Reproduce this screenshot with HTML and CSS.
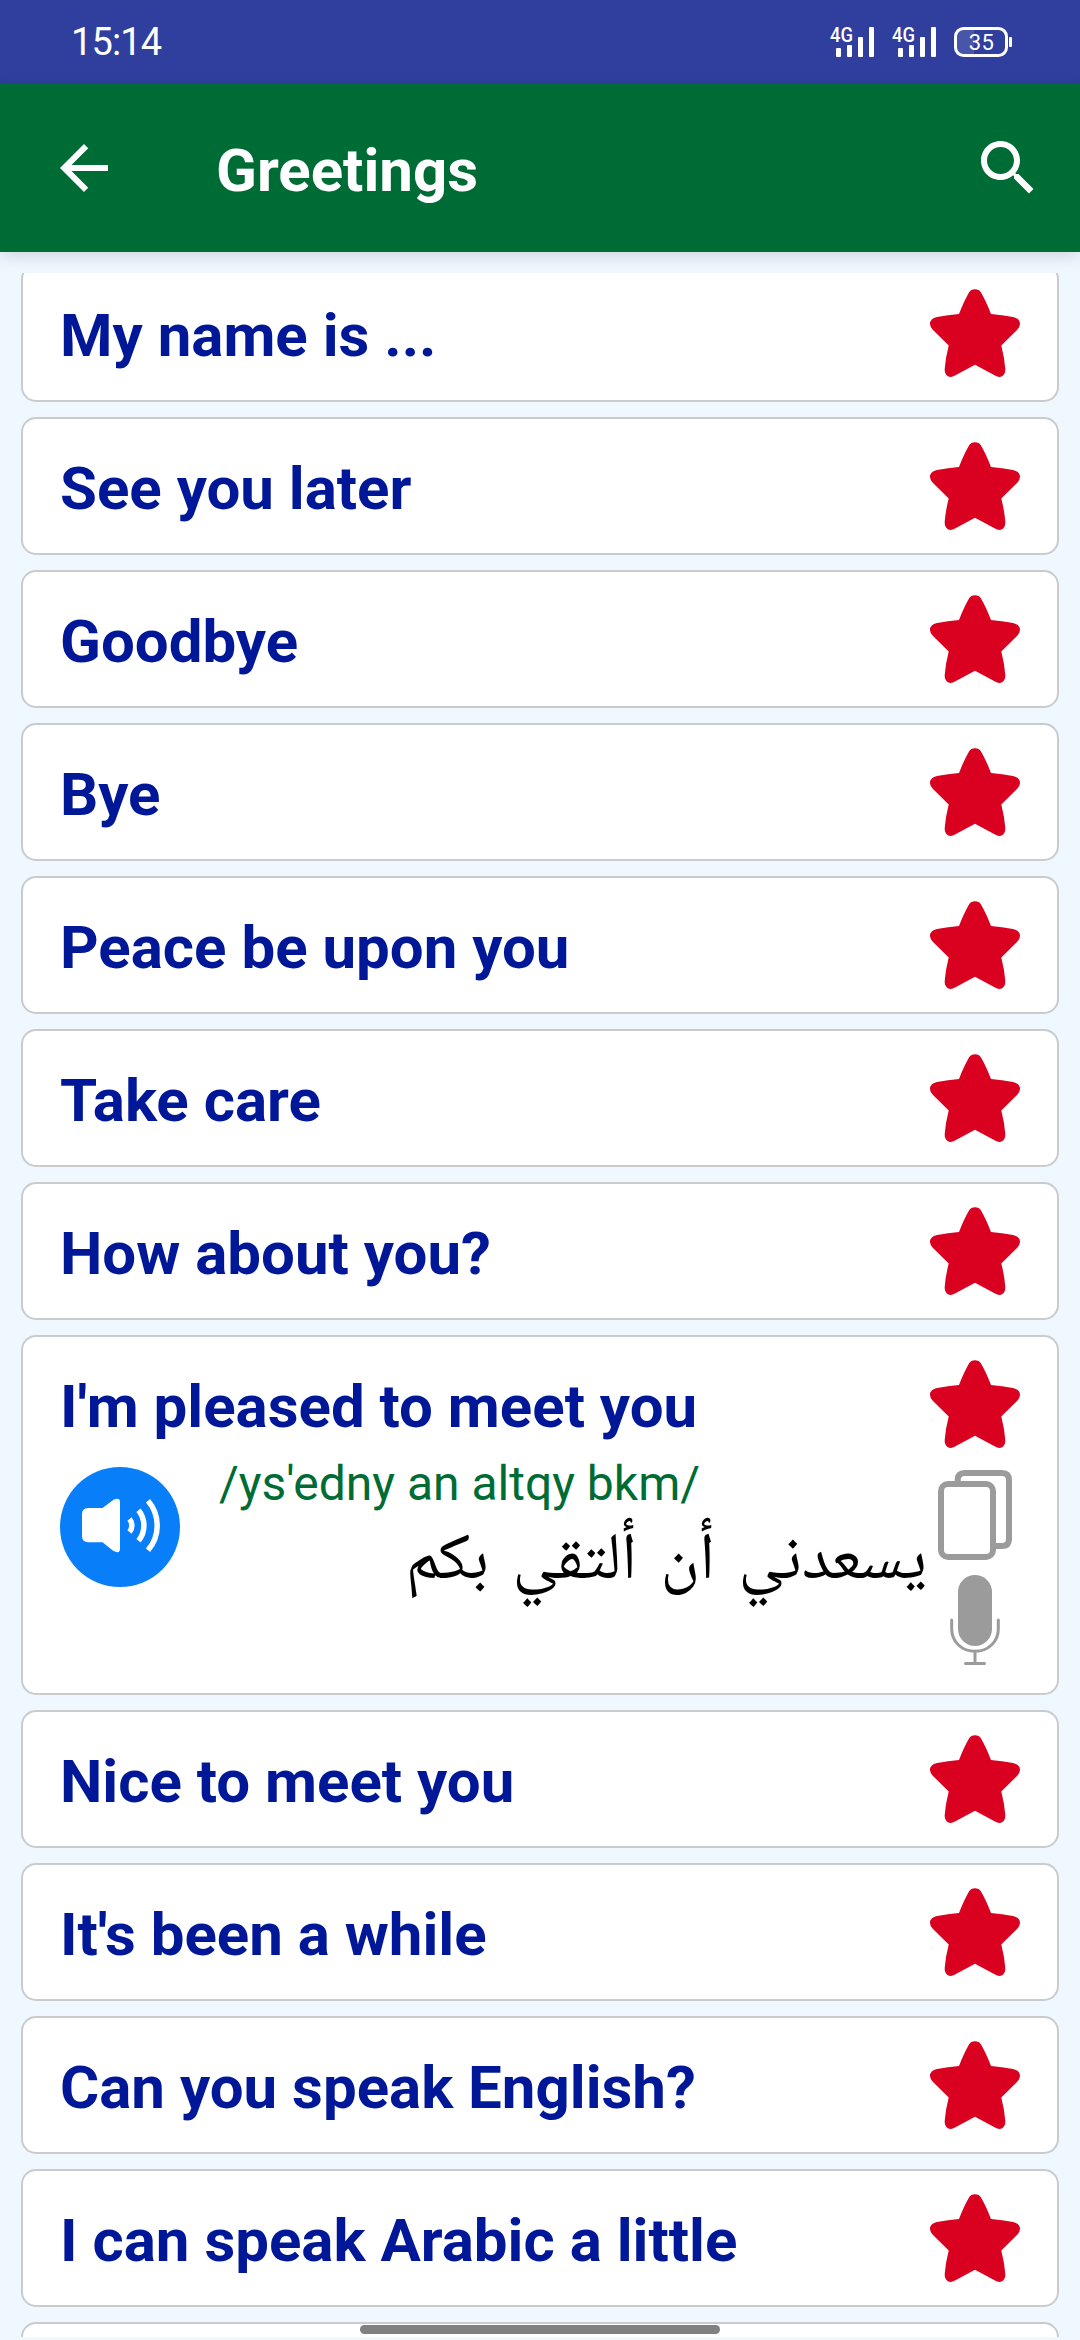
FILE: index.html
```
<!DOCTYPE html>
<html lang="en">

<head>
  <meta charset="utf-8">
  <title>Greetings</title>
  <link rel="stylesheet" href="styles.css">
</head>

<body>
  <svg class="sprite" width="0" height="0">
    <symbol id="star" viewBox="0 0 90 90">
      <path d="M39 4.5Q41 1.3 45 1.3T51 4.5Q56 13 61 26Q72 26.800 83 29Q90 30.500 90 36Q90 39 87 42L71.300 57.500Q74.500 70 75.300 81Q75.500 86 72.500 88Q69 90 65 87.500L45 76.700L25 87.500Q21 90 17.500 88Q14.500 86 14.700 81Q15.500 70 18.700 57.500L3 42Q0 39 0 36Q0 30.500 7 29Q18 26.800 29 26Q34 13 39 4.500Z" fill="#d90020"/>
    </symbol>
    <symbol id="bars" viewBox="0 0 46 30">
      <rect x="6" y="21" width="5" height="9" rx="1"/>
      <rect x="17" y="18" width="5" height="12" rx="1"/>
      <rect x="28" y="10" width="5" height="20" rx="1"/>
      <rect x="39" y="0" width="5" height="30" rx="1"/>
    </symbol>
  </svg>

  <div class="status-bar">
    <span class="clock">15:14</span>
    <div class="status-icons">
      <svg class="signal" viewBox="0 0 46 30"><text class="net" x="0" y="15" textLength="23" lengthAdjust="spacingAndGlyphs">4G</text><use href="#bars" width="46" height="30"/></svg>
      <svg class="signal" viewBox="0 0 46 30"><text class="net" x="0" y="15" textLength="23" lengthAdjust="spacingAndGlyphs">4G</text><use href="#bars" width="46" height="30"/></svg>
      <svg class="battery" viewBox="0 0 58 30">
        <path d="M20 2H10Q2 2 2 10V20Q2 28 10 28H20Z" fill="#fff" fill-opacity=".12"/>
        <rect x="1.500" y="1.500" width="51" height="27" rx="8" fill="none" stroke="#fff" stroke-width="3"/>
        <rect x="55" y="10" width="3" height="10" rx="1" fill="#fff"/>
        <text class="level" x="27.300" y="22.500" textLength="25">35</text>
      </svg>
    </div>
  </div>

  <div class="app-bar">
    <svg class="icon" viewBox="0 0 24 24"><path d="M20 11H7.830l5.590-5.590L12 4l-8 8 8 8 1.410-1.410L7.830 13H20v-2z"/></svg>
    <h1 class="title">Greetings</h1>
    <svg class="icon" viewBox="0 0 24 24"><path d="M15.500 14h-.79l-.28-.27C15.410 12.590 16 11.110 16 9.500 16 5.910 13.090 3 9.500 3S3 5.910 3 9.500 5.910 16 9.500 16c1.610 0 3.090-.59 4.230-1.570l.27.28v.79l5 4.990L20.490 19l-4.990-5zm-6 0C7.010 14 5 11.990 5 9.500S7.010 5 9.500 5 14 7.010 14 9.500 11.990 14 9.500 14z"/></svg>
  </div>

  <div class="list">
    <div class="card"><div class="row"><span class="phrase">My name is ...</span><svg class="star"><use href="#star"/></svg></div></div>
    <div class="card"><div class="row"><span class="phrase">See you later</span><svg class="star"><use href="#star"/></svg></div></div>
    <div class="card"><div class="row"><span class="phrase">Goodbye</span><svg class="star"><use href="#star"/></svg></div></div>
    <div class="card"><div class="row"><span class="phrase">Bye</span><svg class="star"><use href="#star"/></svg></div></div>
    <div class="card"><div class="row"><span class="phrase">Peace be upon you</span><svg class="star"><use href="#star"/></svg></div></div>
    <div class="card"><div class="row"><span class="phrase">Take care</span><svg class="star"><use href="#star"/></svg></div></div>
    <div class="card"><div class="row"><span class="phrase">How about you?</span><svg class="star"><use href="#star"/></svg></div></div>

    <div class="card card-open">
      <div class="row"><span class="phrase">I'm pleased to meet you</span><svg class="star"><use href="#star"/></svg></div>
      <div class="details">
        <svg class="play" viewBox="0 0 120 120">
          <circle cx="60" cy="60" r="60" fill="#087ff9"/>
          <path d="M28 41H42.500L53.500 32.700Q60 30 60 35V82Q60 87 53.500 84L42.500 75.300H28Q22 75 22 69V47Q22 41.300 28 41Z" fill="#fff"/>
          <g fill="none" stroke="#fff" stroke-width="5.500">
            <path d="M69.500 52A10 10 0 0 1 69.500 65"/>
            <path d="M78.500 43.300A24 24 0 0 1 78.500 73.700"/>
            <path d="M88 33.700A38 38 0 0 1 88 83.300"/>
          </g>
        </svg>
        <div class="translation">
          <div class="phonetic">/ys'edny an altqy bkm/</div>
          <div class="arabic" lang="ar" dir="rtl">يسعدني أن ألتقي بكم</div>
        </div>
        <div class="actions">
          <svg viewBox="0 0 90 90" fill="none" stroke="#9b9b9b" stroke-width="6">
            <rect x="11" y="14" width="52" height="73" rx="7"/>
            <path d="M27.700 12V10Q27.700 3 34.700 3H72Q79 3 79 10V69Q79 76 72 76H64"/>
          </svg>
          <svg viewBox="0 0 90 90" fill="none" stroke="#9b9b9b" stroke-width="3" stroke-linecap="round">
            <rect x="28" y="0" width="34" height="71" rx="17" fill="#9b9b9b" stroke="none"/>
            <path d="M21.700 45V54C21.700 67 32 76.300 45 76.300S68.300 67 68.300 54V45M45 77V88M35.500 88.500H54.500"/>
          </svg>
        </div>
      </div>
    </div>

    <div class="card"><div class="row"><span class="phrase">Nice to meet you</span><svg class="star"><use href="#star"/></svg></div></div>
    <div class="card"><div class="row"><span class="phrase">It's been a while</span><svg class="star"><use href="#star"/></svg></div></div>
    <div class="card"><div class="row"><span class="phrase">Can you speak English?</span><svg class="star"><use href="#star"/></svg></div></div>
    <div class="card"><div class="row"><span class="phrase">I can speak Arabic a little</span><svg class="star"><use href="#star"/></svg></div></div>
    <div class="card"><div class="row"></div></div>
  </div>

  <div class="nav-handle"></div>
</body>
</html>
```
FILE: styles.css
```
* { box-sizing: border-box; }

html, body {
  margin: 0;
  padding: 0;
}

body {
  display: flex;
  flex-direction: column;
  height: 2340px;
  overflow: hidden;
  background: #f0f8ff;
  font-family: Roboto, "Noto Sans", sans-serif;
}

svg {
  display: block;
  flex: none;
}

.sprite {
  position: absolute;
}

/* system bar */
.status-bar {
  display: flex;
  flex: none;
  justify-content: space-between;
  align-items: center;
  height: 84px;
  padding: 0 68px 0 71px;
  background: #303e9e;
  color: #fff;
}

.clock {
  font-size: 38px;
  line-height: 44px;
  letter-spacing: -0.9px;
}

.status-icons {
  display: flex;
}

.signal {
  width: 46px;
  height: 30px;
  margin-right: 16px;
  fill: #fff;
  overflow: visible;
}

.battery {
  width: 58px;
  height: 30px;
}

.net {
  font-size: 21px;
  font-weight: 500;
}

.level {
  font-size: 22px;
  font-weight: 400;
  fill: #fff;
  text-anchor: middle;
}

.app-bar {
  display: flex;
  flex: none;
  align-items: center;
  height: 168px;
  padding: 0 36px 0 48px;
  background: #006c35;
  box-shadow: 0 4px 16px rgba(0, 0, 0, 0.14);
}

.icon {
  width: 72px;
  height: 72px;
  fill: #fff;
}

.title {
  flex: 1;
  margin: 0;
  padding: 5px 0 0 96px;
  color: #fff;
  font-size: 60px;
  font-weight: 700;
  line-height: 70px;
}

.list {
  flex: 1;
  margin: 21px 21px 3px;
  overflow: hidden;
}

.card {
  height: 138px;
  margin-bottom: 15px;
  padding: 0 37px;
  border: 2px solid #c9cbcd;
  border-radius: 15px;
  background: #fff;
}

/* list is scrolled a little past the top of the first card */
.card:first-child {
  margin-top: -9px;
}

.card-open {
  height: 360px;
}

.row {
  display: flex;
  justify-content: space-between;
  align-items: center;
  height: 134px;
}

.phrase {
  padding-top: 5px;
  color: #001898;
  font-size: 60px;
  font-weight: 700;
  line-height: 70px;
  white-space: nowrap;
}

.star {
  width: 90px;
  height: 90px;
}

.details {
  display: flex;
  margin-top: -4px;
}

.play {
  width: 120px;
  height: 120px;
}

.translation {
  flex: 1;
  padding-left: 39px;
}

.phonetic {
  margin-top: -11px;
  color: #006c35;
  font-size: 48px;
  line-height: 56px;
}

.arabic {
  margin-top: 12px;
  padding-right: 3px;
  color: #000;
  font-family: "Noto Naskh Arabic", "Noto Sans Arabic", "DejaVu Sans", sans-serif;
  font-size: 66px;
  line-height: 80px;
  word-spacing: 9px;
  white-space: nowrap;
}

.actions {
  display: flex;
  flex-direction: column;
  gap: 15px;
  padding-top: 3px;
}

.actions svg {
  width: 90px;
  height: 90px;
}

.nav-handle {
  position: absolute;
  top: 2325px;
  left: 360px;
  width: 360px;
  height: 9px;
  border-radius: 5px;
  background: #808080;
}
```
